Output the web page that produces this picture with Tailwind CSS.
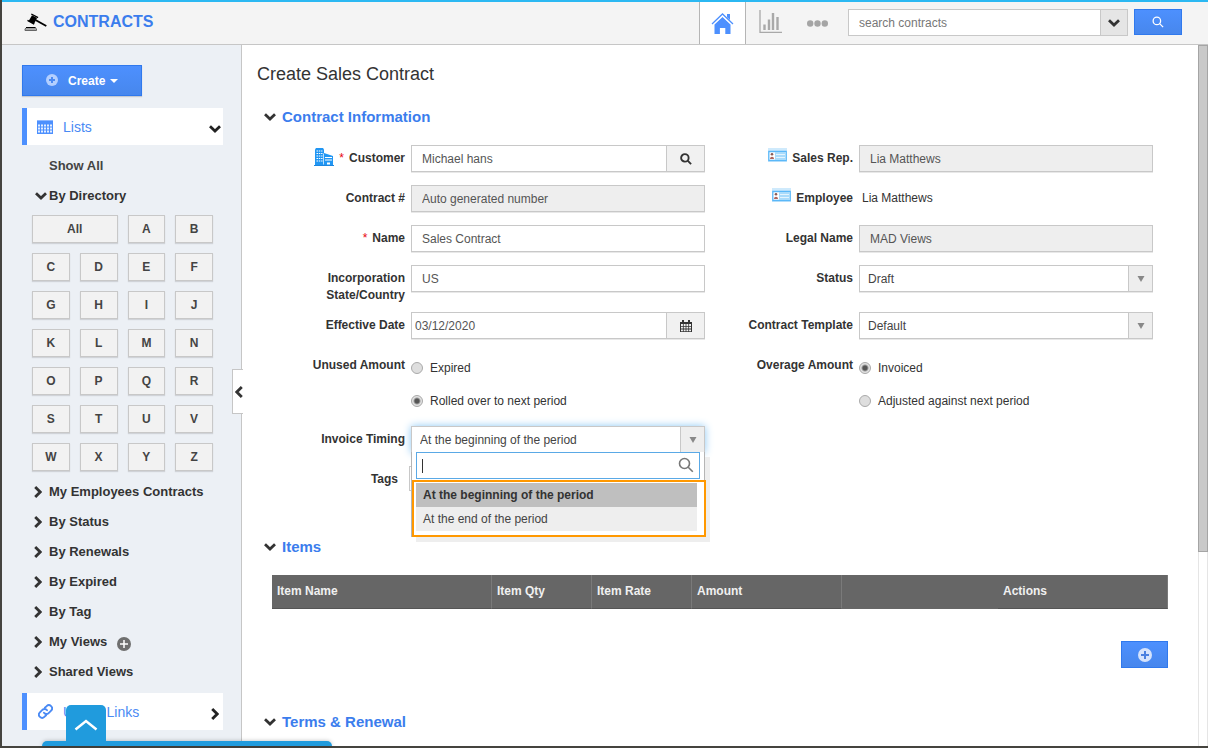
<!DOCTYPE html>
<html lang="en">
<head>
<meta charset="UTF-8" />
<meta name="viewport" content="width=device-width, initial-scale=1.0" />
<title>Contracts</title>
<script src="https://cdn.jsdelivr.net/npm/@tailwindcss/browser@4"></script>
</head>
<body class="font-['Liberation_Sans',Arial,sans-serif] text-xs text-[#333]">

<!-- shared icons -->
<svg class="hidden">
  <symbol id="down" viewBox="0 0 12 8"><path d="M1 1.300 6 6l5-4.700" fill="none" stroke="currentColor" stroke-width="2.800"/></symbol>
  <symbol id="right" viewBox="0 0 8 12"><path d="M1.200 1 6.200 6l-5 5" fill="none" stroke="currentColor" stroke-width="2.800"/></symbol>
  <symbol id="glass" viewBox="0 0 16 16"><circle cx="6.500" cy="6.500" r="5" fill="none" stroke="currentColor" stroke-width="var(--w,2)"/><path d="m10.200 10.200 4.600 4.600" stroke="currentColor" stroke-width="var(--w,2)"/></symbol>
  <symbol id="card" viewBox="0 0 19 14"><path d="M0 0h19v14H0z" fill="#cfeafc"/><path d="M.8 3.500h17.400v9H.8z" fill="#fff" stroke="#5bb8f8" stroke-width="1.300"/><path d="M7 4h11v8H7z" fill="#a9dbfb"/><path d="M8 6.500h9M8 9.500h9" stroke="#e4f4fe"/><circle cx="4" cy="6.200" r="1.300" fill="#8a5a55"/><path d="M2 11c0-3 4-3 4 0z" fill="#b0655d"/></symbol>
</svg>

<div class="flex h-screen flex-col overflow-hidden border-b-2 border-l-2 border-[#45443f] bg-white">

<header class="flex h-[45px] shrink-0 items-stretch border-t-2 border-b border-t-[#2bb8f2] border-b-[#c6c6c6] bg-[#f4f4f4] pr-[26px]">
  <a href="#" class="flex items-center gap-[6px] pb-0.5 pl-[22px] text-base font-bold text-[#3b7ded]">
    <svg class="h-[19px] w-[23px]" viewBox="0 0 23 19">
      <path d="M8 2.200 13 5l-3 6-5.300-3z" fill="#000"/><path d="m7.300 1 6.800 3.600M3.500 7.400l6.700 3.700" stroke="#000" stroke-width="1.300"/>
      <path d="m11.500 7 10.800 6" stroke="#000" stroke-width="1.900"/><path d="M1 17.500V16l1.200-1.300h9L12.500 16v1.500z" fill="#aaa" stroke="#666"/><path d="M2 14.500h9.500" stroke="#000"/>
    </svg>
    CONTRACTS
  </a>
  <nav class="ml-auto flex">
    <a href="#" aria-label="Home" class="flex w-[47px] items-center justify-center border-x border-[#b5b5b5] bg-white">
      <svg class="h-[22px] w-[23px]" viewBox="0 0 23 22" fill="#4d90fe"><path d="M3.500 12.500 11.500 5l8 7.500V22h-5.200v-6H8.900v6H3.500z"/><path d="M16 2h3v6l-3-2.800z"/><path d="m1 12 10.500-10L22 12" fill="none" stroke="#4d90fe" stroke-width="1.300"/><path d="M2.500 12.500 11.500 4l9 8.500" fill="none" stroke="#fff"/></svg>
    </a>
    <a href="#" aria-label="Reports" class="flex w-12 items-start justify-center pt-2">
      <svg class="h-[23px] w-[23px]" viewBox="0 0 23 23" fill="none" stroke="#a9a9a9"><path d="M1 0v22.300h22" stroke-width="1.300"/><path d="M5.500 20v-5.500M10 20V9.500M14 20V3M18.500 20V7" stroke-width="2.400"/></svg>
    </a>
    <a href="#" aria-label="More" class="flex w-[46px] items-center justify-center">
      <svg class="h-[7px] w-[21px]" viewBox="0 0 21 7" fill="#a5a5a5"><circle cx="3.200" cy="3.500" r="3.200"/><circle cx="10.500" cy="3.500" r="3.200"/><circle cx="17.800" cy="3.500" r="3.200"/></svg>
    </a>
  </nav>
  <form class="ml-2 flex pt-[7px]">
    <input type="text" aria-label="Search contracts" placeholder="search contracts" class="h-[27px] w-[253px] border border-[#c8c8c8] bg-white px-[10px] placeholder:text-[#777]" />
    <button type="button" aria-label="Search options" class="flex h-[27px] w-[27px] items-center justify-center border border-l-0 border-[#c8c8c8] bg-[#e5e5e5]"><svg class="h-2 w-3"><use href="#down"/></svg></button>
    <button type="button" aria-label="Search" class="ml-[6px] flex h-[26px] w-12 items-center justify-center border border-[#3079ed] bg-linear-to-b from-[#4d90fe] to-[#4787ed] text-white"><svg class="h-3 w-3 [--w:1.700]"><use href="#glass"/></svg></button>
  </form>
</header>

<div class="flex min-h-0 flex-1">

<aside class="relative w-60 shrink-0 border-r border-[#c6c6c6] bg-[#ecf0f5] pt-5 pr-[18px] pl-5 text-[13px] font-bold">
  <button type="button" class="flex h-[31px] w-[120px] items-center border border-[#3079ed] bg-linear-to-b from-[#4d90fe] to-[#4787ed] pl-[23px] text-xs font-bold text-white shadow-[0_1px_1px_#c5cad2]">
    <svg class="mb-0.5 h-3 w-3" viewBox="0 0 12 12"><circle cx="6" cy="6" r="6" fill="#b3cfff"/><path d="M6 3v6M3 6h6" stroke="#4a8af3" stroke-width="2"/></svg>
    <span class="ml-[10px]">Create</span>
    <svg class="ml-[5px] h-1 w-2" viewBox="0 0 8 4"><path d="M0 0h8L4 4z" fill="#fff"/></svg>
  </button>

  <a href="#" class="mt-3 flex h-[37px] items-center border-l-5 border-[#4d90fe] bg-white pr-[2px] pl-[10px] text-sm font-normal text-[#4a8af4]">
    <svg class="h-[14px] w-4" viewBox="0 0 16 14"><path d="M0 0h16v14H0z" fill="#4d90fe"/><path d="M1 5.500h14M1 8.500h14M1 11.500h14" stroke="#e6efff" stroke-width="2" stroke-dasharray="2 1"/><path d="M0 .5h16" stroke="#8fb8ff"/></svg>
    <span class="ml-[10px]">Lists</span>
    <svg class="mt-1 ml-auto h-2 w-3 text-[#222]"><use href="#down"/></svg>
  </a>

  <ul class="mt-[6px] leading-[30px]">
    <li class="pl-[27px] text-[#444]"><a href="#">Show All</a></li>
    <li><a href="#" class="flex items-center pl-[13px]"><svg class="mr-0.5 h-2 w-3"><use href="#down"/></svg>By Directory</a></li>
  </ul>

  <div class="mt-1 mr-[10px] ml-[10px] grid grid-cols-4 gap-[10px] text-xs text-[#444] *:h-7 *:border *:border-[#c8c8c8] *:bg-[#f2f2f2] *:font-bold *:shadow-[0_1px_1px_#d0d3d8]">
    <button type="button" class="col-span-2">All</button><button type="button">A</button><button type="button">B</button>
    <button type="button">C</button><button type="button">D</button><button type="button">E</button><button type="button">F</button>
    <button type="button">G</button><button type="button">H</button><button type="button">I</button><button type="button">J</button>
    <button type="button">K</button><button type="button">L</button><button type="button">M</button><button type="button">N</button>
    <button type="button">O</button><button type="button">P</button><button type="button">Q</button><button type="button">R</button>
    <button type="button">S</button><button type="button">T</button><button type="button">U</button><button type="button">V</button>
    <button type="button">W</button><button type="button">X</button><button type="button">Y</button><button type="button">Z</button>
  </div>

  <ul class="mt-[6px] leading-[30px] *:flex *:items-center *:gap-[7px] *:pl-3">
    <li><svg class="h-3 w-2"><use href="#right"/></svg><a href="#">My Employees Contracts</a></li>
    <li><svg class="h-3 w-2"><use href="#right"/></svg><a href="#">By Status</a></li>
    <li><svg class="h-3 w-2"><use href="#right"/></svg><a href="#">By Renewals</a></li>
    <li><svg class="h-3 w-2"><use href="#right"/></svg><a href="#">By Expired</a></li>
    <li><svg class="h-3 w-2"><use href="#right"/></svg><a href="#">By Tag</a></li>
    <li><svg class="h-3 w-2"><use href="#right"/></svg><a href="#">My Views</a>
      <button type="button" aria-label="Add view" class="mt-[3px] ml-[3px]"><svg class="h-[14px] w-[14px]" viewBox="0 0 14 14"><circle cx="7" cy="7" r="7" fill="#6f6f6f"/><path d="M7 3v8M3 7h8" stroke="#fff" stroke-width="1.500"/></svg></button></li>
    <li><svg class="h-3 w-2"><use href="#right"/></svg><a href="#">Shared Views</a></li>
  </ul>

  <a href="#" class="mt-[6px] flex h-[37px] items-center border-l-5 border-[#4d90fe] bg-white pr-1 pl-[11px] text-sm font-normal text-[#4a8af4]">
    <svg class="h-[15px] w-[15px]" viewBox="0 0 24 24" fill="none" stroke="currentColor" stroke-width="3" stroke-linecap="round"><path d="M9.500 14a5 5 0 0 0 7.500.5l4-4a5 5 0 0 0-7.200-7L11 6M14.500 10a5 5 0 0 0-7.500-.5l-4 4a5 5 0 0 0 7.200 7L13 18"/></svg>
    <span class="ml-[10px]">Useful Links</span>
    <svg class="mt-1 ml-auto h-3 w-2 text-[#222]"><use href="#right"/></svg>
  </a>

  <!-- collapse handle -->
  <button type="button" aria-label="Collapse sidebar" class="absolute top-[324px] -right-0.5 flex h-[45px] w-[11px] items-center justify-end border border-r-0 border-[#c6c6c6] bg-white"><svg class="h-3 w-2 rotate-180"><use href="#right"/></svg></button>
</aside>

<main class="min-w-0 flex-1 overflow-hidden px-[15px] pt-[17px]">
  <h1 class="text-lg leading-6">Create Sales Contract</h1>

  <h2 class="mt-[22px] flex items-center gap-[6px] pl-[7px] text-[15px] leading-[18px] font-bold text-[#3b7ded]"><svg class="h-2 w-3 text-[#333]"><use href="#down"/></svg>Contract Information</h2>

  <form class="mx-[15px] mt-[19px] grid grid-cols-2">

    <div class="grid grid-cols-[133px_1fr] gap-x-[6px] pr-[15px]">
      <label for="customer" class="flex items-start justify-end pt-[5px] leading-[17px] font-bold">
        <svg class="-mt-0.5 h-[18px] w-5" viewBox="0 0 20 18"><path d="M1 1.500 2 0h7l1 1.500V17H1z" fill="#2196f3"/><path d="M10 5l9 3v9h-9z" fill="#2196f3"/><path d="M2.500 3h6M2.500 5.500h6M2.500 8h6M2.500 10.500h6M2.500 13h6" stroke="#fff" stroke-width="1.200" stroke-dasharray="1.500 .8"/><path d="M9.500 5.500v11" stroke="#fff" stroke-width=".7"/><path d="M11 9.500h7M11 12h7" stroke="#fff"/><path d="M0 17h20v1H0z" fill="#1b86e0"/><path d="M13 14.500h3v2h-3z" fill="#fff"/></svg>
        <span class="ml-[5px] font-normal text-red-600">*</span><span class="ml-[5px]">Customer</span>
      </label>
      <div class="mb-[13px] flex">
        <input id="customer" value="Michael hans" class="h-[27px] min-w-0 flex-1 border border-[#c8c8c8] px-[10px] text-[#555] shadow-[0_1px_0_#e8e8e8]" />
        <button type="button" aria-label="Find customer" class="flex h-[27px] w-[38px] items-center justify-center border border-l-0 border-[#c8c8c8] bg-[#f1f1f1] shadow-[0_1px_0_#e8e8e8]"><svg class="h-3 w-3 [--w:2.500]"><use href="#glass"/></svg></button>
      </div>
    </div>
    <div class="grid grid-cols-[133px_1fr] gap-x-[6px] pr-[15px]">
      <label for="rep" class="flex items-start justify-end gap-[5px] pt-[5px] leading-[17px] font-bold"><svg class="-mt-0.5 h-[14px] w-[19px]"><use href="#card"/></svg>Sales Rep.</label>
      <input id="rep" readonly value="Lia Matthews" class="h-[27px] min-w-0 border border-[#c8c8c8] bg-[#eee] px-[10px] text-[#555] shadow-[0_1px_0_#e8e8e8]" />
    </div>

    <div class="grid grid-cols-[133px_1fr] gap-x-[6px] pr-[15px]">
      <label for="number" class="pt-[5px] text-right leading-[17px] font-bold">Contract #</label>
      <input id="number" readonly value="Auto generated number" class="mb-[13px] h-[27px] min-w-0 border border-[#c8c8c8] bg-[#eee] px-[10px] text-[#555] shadow-[0_1px_0_#e8e8e8]" />
    </div>
    <div class="grid grid-cols-[133px_1fr] gap-x-[6px] pr-[15px]">
      <span class="flex items-start justify-end gap-[5px] pt-[5px] leading-[17px] font-bold"><svg class="-mt-0.5 h-[14px] w-[19px]"><use href="#card"/></svg>Employee</span>
      <span class="pt-[5px] pl-[3px] leading-[17px]">Lia Matthews</span>
    </div>

    <div class="grid grid-cols-[133px_1fr] gap-x-[6px] pr-[15px]">
      <label for="name" class="pt-[5px] text-right leading-[17px] font-bold"><span class="mr-[5px] font-normal text-red-600">*</span>Name</label>
      <input id="name" value="Sales Contract" class="mb-[13px] h-[27px] min-w-0 border border-[#c8c8c8] px-[10px] text-[#555] shadow-[0_1px_0_#e8e8e8]" />
    </div>
    <div class="grid grid-cols-[133px_1fr] gap-x-[6px] pr-[15px]">
      <label for="legal" class="pt-[5px] text-right leading-[17px] font-bold">Legal Name</label>
      <input id="legal" readonly value="MAD Views" class="h-[27px] min-w-0 border border-[#c8c8c8] bg-[#eee] px-[10px] text-[#555] shadow-[0_1px_0_#e8e8e8]" />
    </div>

    <div class="grid grid-cols-[133px_1fr] gap-x-[6px] pr-[15px]">
      <label for="state" class="pt-[5px] pb-2 text-right leading-[17px] font-bold">Incorporation State/Country</label>
      <input id="state" value="US" class="h-[27px] min-w-0 border border-[#c8c8c8] px-[10px] text-[#555] shadow-[0_1px_0_#e8e8e8]" />
    </div>
    <div class="grid grid-cols-[133px_1fr] gap-x-[6px] pr-[15px]">
      <label for="status" class="pt-[5px] text-right leading-[17px] font-bold">Status</label>
      <div class="relative h-[27px] shadow-[0_1px_0_#e8e8e8]">
        <select id="status" class="h-full w-full appearance-none border border-[#c8c8c8] bg-white px-2 text-[#444]"><option>Draft</option></select>
        <span class="pointer-events-none absolute inset-y-0 right-0 flex w-[25px] items-center justify-center border border-[#c8c8c8] bg-[#eee]"><svg class="h-[6px] w-2" viewBox="0 0 8 6"><path d="M.5 0h7L4 6z" fill="#888"/></svg></span>
      </div>
    </div>

    <div class="grid grid-cols-[133px_1fr] gap-x-[6px] pr-[15px]">
      <label for="date" class="pt-[5px] text-right leading-[17px] font-bold">Effective Date</label>
      <div class="mb-[13px] flex">
        <input id="date" value="03/12/2020" class="h-[27px] min-w-0 flex-1 border border-[#c8c8c8] px-[3px] text-[#555] shadow-[0_1px_0_#e8e8e8]" />
        <button type="button" aria-label="Pick date" class="flex h-[27px] w-[38px] items-center justify-center border border-l-0 border-[#c8c8c8] bg-[#f1f1f1] shadow-[0_1px_0_#e8e8e8]"><svg class="h-3 w-3" viewBox="0 0 12 12"><path d="M0 2h12v10H0z" fill="#333"/><path d="M2 0h2v3H2zM8 0h2v3H8z" fill="#333"/><path d="M1 5h10M1 7.700h10M1 10.300h10" stroke="#f1f1f1" stroke-width="1.800" stroke-dasharray="1.900 .8"/></svg></button>
      </div>
    </div>
    <div class="grid grid-cols-[133px_1fr] gap-x-[6px] pr-[15px]">
      <label for="template" class="pt-[5px] text-right leading-[17px] font-bold">Contract Template</label>
      <div class="relative h-[27px] shadow-[0_1px_0_#e8e8e8]">
        <select id="template" class="h-full w-full appearance-none border border-[#c8c8c8] bg-white px-2 text-[#444]"><option>Default</option></select>
        <span class="pointer-events-none absolute inset-y-0 right-0 flex w-[25px] items-center justify-center border border-[#c8c8c8] bg-[#eee]"><svg class="h-[6px] w-2" viewBox="0 0 8 6"><path d="M.5 0h7L4 6z" fill="#888"/></svg></span>
      </div>
    </div>

    <fieldset class="grid grid-cols-[133px_1fr] gap-x-[6px] pr-[15px]">
      <span class="pt-[5px] text-right leading-[17px] font-bold">Unused Amount</span>
      <div class="flex flex-col gap-[17px] pt-2 pb-[17px] leading-4">
        <label class="flex items-center gap-[7px]"><input type="radio" name="unused" class="h-3 w-3 appearance-none rounded-full border border-[#aaa] bg-[#dedede] checked:bg-[radial-gradient(circle,#555_2px,#e2e2e2_4px)]" />Expired</label>
        <label class="flex items-center gap-[7px]"><input type="radio" name="unused" checked class="h-3 w-3 appearance-none rounded-full border border-[#aaa] bg-[#dedede] checked:bg-[radial-gradient(circle,#555_2px,#e2e2e2_4px)]" />Rolled over to next period</label>
      </div>
    </fieldset>
    <fieldset class="grid grid-cols-[133px_1fr] gap-x-[6px] pr-[15px]">
      <span class="pt-[5px] text-right leading-[17px] font-bold">Overage Amount</span>
      <div class="flex flex-col gap-[17px] pt-2 pb-[17px] leading-4">
        <label class="flex items-center gap-[7px]"><input type="radio" name="overage" checked class="h-3 w-3 appearance-none rounded-full border border-[#aaa] bg-[#dedede] checked:bg-[radial-gradient(circle,#555_2px,#e2e2e2_4px)]" />Invoiced</label>
        <label class="flex items-center gap-[7px]"><input type="radio" name="overage" class="h-3 w-3 appearance-none rounded-full border border-[#aaa] bg-[#dedede] checked:bg-[radial-gradient(circle,#555_2px,#e2e2e2_4px)]" />Adjusted against next period</label>
      </div>
    </fieldset>

    <div class="col-start-1 grid grid-cols-[133px_1fr] gap-x-[6px] pr-[15px]">
      <label for="timing" class="pt-[5px] text-right leading-[17px] font-bold">Invoice Timing</label>
      <div class="relative z-10 mb-[13px] h-[27px] shadow-[0_0_8px_#8cc8f5]">
        <select id="timing" class="h-full w-full appearance-none border border-[#c8c8c8] bg-white px-2 text-[#444]"><option>At the beginning of the period</option><option>At the end of the period</option></select>
        <span class="pointer-events-none absolute inset-y-0 right-0 flex w-[25px] items-center justify-center border border-[#c8c8c8] bg-[#eee]"><svg class="h-[6px] w-2" viewBox="0 0 8 6"><path d="M.5 0h7L4 6z" fill="#888"/></svg></span>
        <!-- open list -->
        <div class="absolute inset-x-0 top-[26px] border-x border-[#b5b5b5] bg-white shadow-[5px_5px_0_#eee]">
          <div class="relative mx-1">
            <input type="text" aria-label="Filter options" class="block h-[27px] w-full border border-[#5aa9e6] px-[5px]" />
            <span class="absolute top-[7px] left-[6px] h-[14px] w-px bg-[#333]"></span>
            <svg class="absolute top-[5px] right-[6px] h-4 w-4 text-[#777] [--w:1.600]"><use href="#glass"/></svg>
          </div>
          <ul class="mt-px -mr-0.5 border-2 border-[#ff9800] pt-px pr-[7px] pb-1 pl-0.5 leading-6 text-[#444]">
            <li class="bg-[#bfbfbf] pl-[7px] font-bold text-[#333]">At the beginning of the period</li>
            <li class="bg-[#eee] pl-[7px]">At the end of the period</li>
          </ul>
        </div>
      </div>
    </div>

    <div class="col-start-1 grid grid-cols-[126px_1fr] gap-x-[11px] pr-[15px]">
      <label for="tags" class="pt-[5px] text-right leading-[17px] font-bold">Tags</label>
      <input id="tags" class="mb-[15px] h-[25px] min-w-0 border border-[#c8c8c8]" />
    </div>
  </form>

  <h2 class="mt-8 flex items-center gap-[6px] pl-[7px] text-[15px] leading-[18px] font-bold text-[#3b7ded]"><svg class="h-2 w-3 text-[#333]"><use href="#down"/></svg>Items</h2>

  <div class="mx-[15px] mt-[19px]">
    <table class="w-full table-fixed border-separate border-spacing-0 bg-[#666] text-left text-[#f0f0f0]">
      <thead>
        <tr class="h-[34px] *:border-r *:border-b *:border-r-[#7a7a7a] *:border-b-[#555] *:px-[5px] *:pb-px">
          <th class="w-[220px]">Item Name</th><th class="w-[100px]">Item Qty</th><th class="w-[100px]">Item Rate</th><th class="w-[150px]">Amount</th><th class="w-[156px] border-r-[#666]! border-b-[#666]!"></th><th>Actions</th>
        </tr>
      </thead>
    </table>
    <button type="button" aria-label="Add item" class="mt-8 ml-auto flex h-[27px] w-[47px] items-center justify-center border border-[#3079ed] bg-linear-to-b from-[#4d90fe] to-[#4787ed]"><svg class="h-[14px] w-[14px]" viewBox="0 0 14 14"><circle cx="7" cy="7" r="7" fill="#d5e3fc"/><path d="M7 3v8M3 7h8" stroke="#4a80e0" stroke-width="2"/></svg></button>
  </div>

  <h2 class="mt-[45px] flex items-center gap-[6px] pl-[7px] text-[15px] leading-[18px] font-bold text-[#3b7ded]"><svg class="h-2 w-3 text-[#333]"><use href="#down"/></svg>Terms &amp; Renewal</h2>
</main>

<div class="w-[10px] shrink-0 border-x border-[#e5e5e5] bg-white">
  <div class="-mx-px h-[507px] border border-[#a5a5a5] bg-[#c9c9c9]"></div>
</div>

</div>
</div>

<!-- pull-up panel -->
<div class="fixed bottom-0.5 left-[42px] z-20 h-[5px] w-[290px] rounded-t-[5px] bg-[#209bdd] shadow-[0_0_4px_#0004]">
  <button type="button" aria-label="Open panel" class="absolute bottom-0 left-6 flex h-[41px] w-10 justify-center rounded-t-[5px] bg-[#209bdd] pt-[14px]"><svg class="h-3 w-6" viewBox="0 0 24 12"><path d="m1.500 10.500 10.500-8.500 10.500 8.500" fill="none" stroke="#fff" stroke-width="2.500"/></svg></button>
</div>

</body>
</html>
